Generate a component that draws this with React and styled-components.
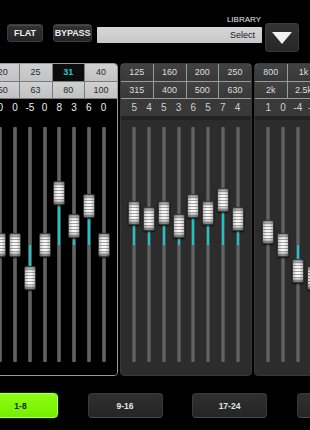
import React from "react";
import styled, { createGlobalStyle, css } from "styled-components";

const Global = createGlobalStyle`
  html, body { margin: 0; padding: 0; background: #000; }
  body { font-family: "Liberation Sans", Arial, sans-serif; }
`;

const Page = styled.div`
  width: 310px;
  height: 430px;
  overflow: hidden;
  background: #000;
  display: flex;
  flex-direction: column;
`;

const TopBar = styled.div`
  height: 63px;
  box-sizing: border-box;
  padding: 16px 0 0 7px;
  display: flex;
  align-items: flex-start;
`;

const ToolButton = styled.div`
  width: ${(p) => p.$w}px;
  height: 18px;
  margin-top: 8px;
  margin-right: ${(p) => p.$mr || 0}px;
  box-sizing: border-box;
  display: flex;
  align-items: center;
  justify-content: center;
  background: linear-gradient(#333, #242424);
  border: 1px solid #3c3c3c;
  border-radius: 3px;
  box-shadow: 1px 2px 2px #000, inset 0 1px 0 #4a4a4a;
  color: #ececec;
  font-weight: bold;
  font-size: 9px;
  letter-spacing: -0.1px;
`;

const Library = styled.div`
  width: 165px;
  display: flex;
  flex-direction: column;
  align-items: flex-end;
  margin-right: 3px;
`;

const LibLabel = styled.div`
  height: 8px;
  line-height: 8px;
  font-size: 8px;
  color: #e6e6e6;
  margin-right: 1px;
`;

const SelectBox = styled.div`
  margin-top: 3px;
  width: 100%;
  height: 16px;
  box-sizing: border-box;
  background: linear-gradient(#d6d6d6, #c8c8c8);
  border-radius: 1px;
  display: flex;
  align-items: center;
  justify-content: flex-end;
  padding-right: 7px;
  color: #222;
  font-size: 9px;
`;

const ArrowButton = styled.div`
  width: 34px;
  height: 29px;
  margin-top: 7px;
  box-sizing: border-box;
  background: linear-gradient(#333, #262626);
  border: 1px solid #3a3a3a;
  border-radius: 3px;
  box-shadow: 1px 2px 2px #000;
  display: flex;
  align-items: center;
  justify-content: center;
`;

const Banks = styled.div`
  height: 313px;
  display: flex;
  gap: 2px;
  margin-left: -14px;
`;

const Bank = styled.div`
  flex: 0 0 132px;
  box-sizing: border-box;
  display: flex;
  flex-direction: column;
  border-radius: 4px;
  overflow: hidden;
  ${(p) =>
    p.$active
      ? css`
          background: #000;
          border: 1px solid #9a9a9a;
        `
      : css`
          background: #2b2b2b;
          border: 1px solid #383838;
        `}
`;

const FreqGrid = styled.div`
  height: 35px;
  display: grid;
  grid-template-columns: repeat(4, 1fr);
  grid-template-rows: 1fr 1fr;
  gap: 1px;
  box-sizing: border-box;
  background: ${(p) => (p.$active ? "#7a7a7a" : "#9a9a9a")};
  padding-bottom: 1px;
`;

const FreqCell = styled.div`
  display: flex;
  align-items: center;
  justify-content: center;
  font-size: 9px;
  ${(p) =>
    p.$selected
      ? css`
          background: #0c0c0c;
          color: #22c8cc;
          font-weight: bold;
        `
      : p.$active
      ? css`
          background: linear-gradient(#d0d0d0, #c2c2c2);
          color: #2a2a2a;
        `
      : css`
          background: linear-gradient(#424242, #383838);
          color: #dedede;
        `}
`;

const ValueRow = styled.div`
  height: 17px;
  display: flex;
  padding: 0 6px;
  background: ${(p) => (p.$active ? "#000" : "#393939")};
  color: ${(p) => (p.$active ? "#f0f0f0" : "#cfcfcf")};
`;

const ValueCell = styled.div`
  width: 15px;
  display: flex;
  align-items: center;
  justify-content: center;
  font-size: 10px;
`;

const FaderArea = styled.div`
  flex: 1;
  display: flex;
  padding: 0 6px;
  background: ${(p) => (p.$active ? "#000" : "#2c2c2c")};
  border-top: ${(p) => (p.$active ? "none" : "4px solid #232323")};
`;

const Channel = styled.div`
  width: 15px;
  position: relative;
`;

const Track = styled.div`
  position: absolute;
  left: 50%;
  transform: translateX(-50%);
  top: ${(p) => (p.$active ? 11 : 7)}px;
  width: 4px;
  height: 235px;
  border-radius: 1px;
  background: linear-gradient(to right, #474747, #6b6b6b 50%, #474747);
`;

const Level = styled.div`
  position: absolute;
  left: 50%;
  width: 2px;
  transform: translateX(-50%);
  background: #17c6c9;
`;

const Cap = styled.div`
  position: absolute;
  left: 50%;
  transform: translateX(-50%);
  width: 12px;
  height: 24px;
  box-sizing: border-box;
  border-radius: 2px;
  border: 1px solid #3a3a3a;
  background:
    linear-gradient(to right, rgba(0,0,0,0.22), rgba(0,0,0,0) 35%, rgba(0,0,0,0) 65%, rgba(0,0,0,0.22)),
    linear-gradient(#8a8a8a, rgba(255,255,255,0) 22%, rgba(255,255,255,0) 78%, #7a7a7a),
    repeating-linear-gradient(#f6f6f6 0 2px, #a4a4a4 2px 3px);
  box-shadow: 0 1px 2px rgba(0,0,0,0.8);
`;

const Tabs = styled.div`
  display: flex;
  gap: 29.5px;
  margin: 17px 0 0 -17px;
`;

const Tab = styled.div`
  flex: 0 0 75px;
  height: 25px;
  box-sizing: border-box;
  border-radius: 4px;
  display: flex;
  align-items: center;
  justify-content: center;
  font-size: 8.5px;
  font-weight: bold;
  ${(p) =>
    p.$active
      ? css`
          background: linear-gradient(#8cff14, #76ee00);
          border: 1px solid #b4ff66;
          color: #1c2a08;
          box-shadow: 0 0 2px #4c8a00, 1px 2px 2px #000;
        `
      : css`
          background: linear-gradient(#2f2f2f, #252525);
          border: 1px solid #3a3a3a;
          border-bottom-color: #4a4a4a;
          color: #e4e4e4;
          box-shadow: 1px 2px 2px #000;
        `}
`;

const PX_PER_DB = 6.5;

const banks = [
  {
    active: true,
    freqs: ["20", "25", "31", "40", "50", "63", "80", "100"],
    selected: 2,
    values: [0, 0, -5, 0, 8, 3, 6, 0],
  },
  {
    freqs: ["125", "160", "200", "250", "315", "400", "500", "630"],
    values: [5, 4, 5, 3, 6, 5, 7, 4],
  },
  {
    freqs: ["800", "1k", "1.25k", "1.6k", "2k", "2.5k", "3.15k", "4k"],
    values: [1, 0, -4, -5, 0, 0, 0, 0],
    pos: [2, 0, -4, -5, 0, 0, 0, 0],
  },
];

function Fader({ value, active }) {
  const center = active ? 129 : 125;
  const capCenter = center - value * PX_PER_DB;
  const capTop = capCenter - 12;
  let level = null;
  if (value > 0) {
    const top = capTop + 24;
    level = { top, height: Math.max(0, center - top) };
  } else if (value < 0) {
    level = { top: center, height: Math.max(0, capTop - center) };
  }
  return (
    <Channel>
      <Track $active={active} />
      {level && level.height > 0 && <Level style={{ top: level.top, height: level.height }} />}
      <Cap style={{ top: capTop }} />
    </Channel>
  );
}

function EqBank({ bank }) {
  const pos = bank.pos || bank.values;
  return (
    <Bank $active={bank.active}>
      <FreqGrid $active={bank.active}>
        {bank.freqs.map((f, i) => (
          <FreqCell key={f} $active={bank.active} $selected={bank.selected === i}>
            {f}
          </FreqCell>
        ))}
      </FreqGrid>
      <ValueRow $active={bank.active}>
        {bank.values.map((v, i) => (
          <ValueCell key={i}>{v}</ValueCell>
        ))}
      </ValueRow>
      <FaderArea $active={bank.active}>
        {pos.map((v, i) => (
          <Fader key={i} value={v} active={bank.active} />
        ))}
      </FaderArea>
    </Bank>
  );
}

export default function App() {
  return (
    <Page>
      <Global />
      <TopBar>
        <ToolButton $w={36} $mr={10}>FLAT</ToolButton>
        <ToolButton $w={39} $mr={5}>BYPASS</ToolButton>
        <Library>
          <LibLabel>LIBRARY</LibLabel>
          <SelectBox>Select</SelectBox>
        </Library>
        <ArrowButton>
          <svg width="20" height="12" viewBox="0 0 20 12">
            <polygon points="0,0 20,0 10,12" fill="#f2f2f2" />
          </svg>
        </ArrowButton>
      </TopBar>
      <Banks>
        {banks.map((b, i) => (
          <EqBank key={i} bank={b} />
        ))}
      </Banks>
      <Tabs>
        <Tab $active>1-8</Tab>
        <Tab>9-16</Tab>
        <Tab>17-24</Tab>
        <Tab>25-32</Tab>
      </Tabs>
    </Page>
  );
}
